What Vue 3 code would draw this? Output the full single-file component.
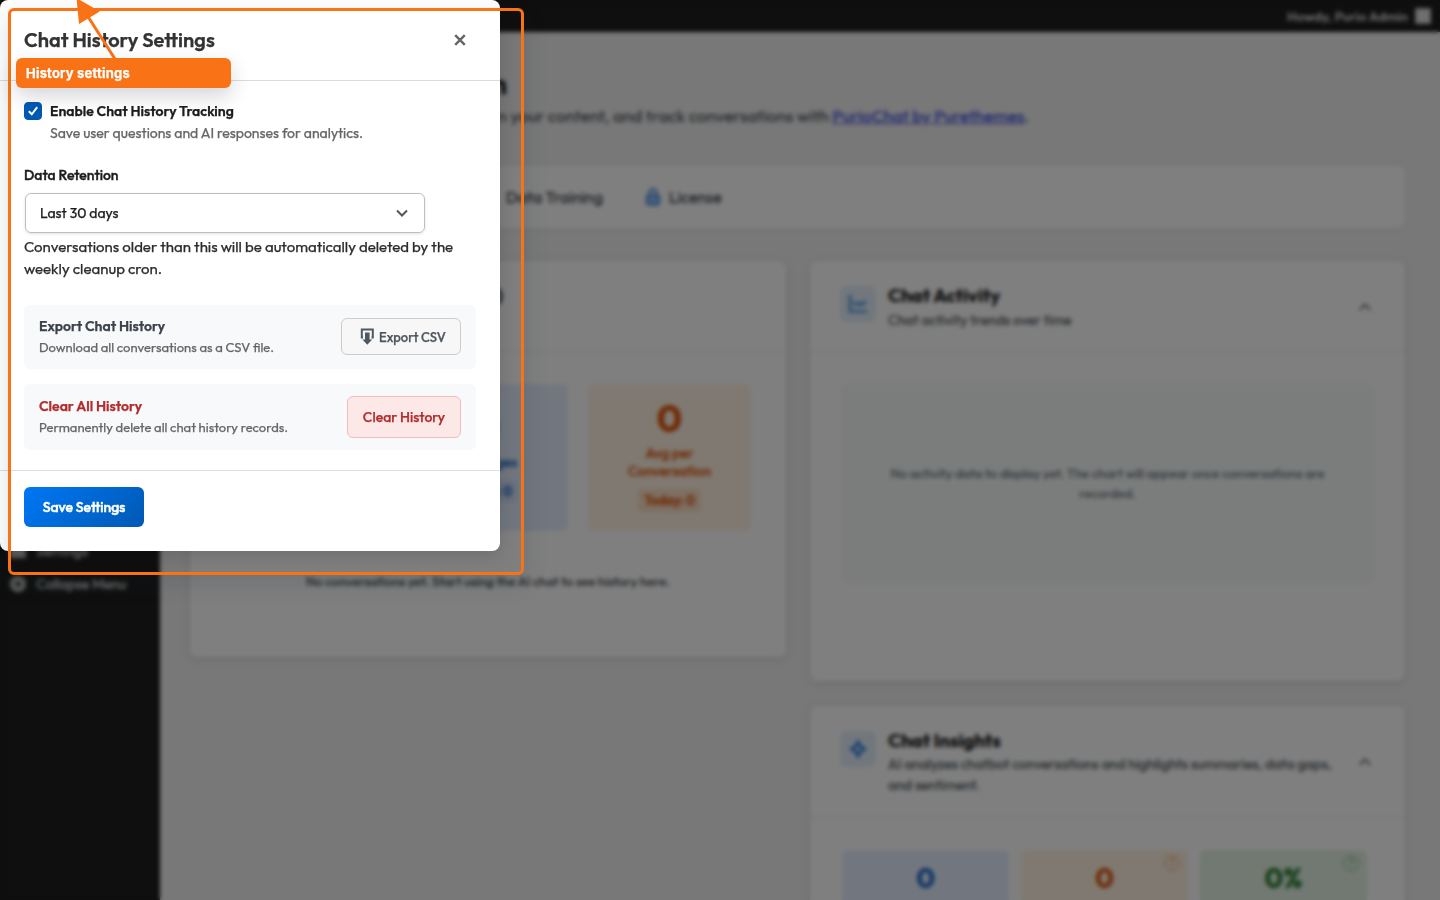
<template>
  <div class="screen">
    <div class="page">
      <header class="admin-bar">
        <span>Howdy, Purio Admin</span>
        <span class="avatar"></span>
      </header>
      <div class="page-body">
        <aside class="sidebar">
          <div class="menu-item menu-current"><i class="menu-square"></i><span>Settings</span></div>
          <div class="menu-item"><i class="menu-circle"></i><span>Collapse Menu</span></div>
        </aside>
        <main class="content">
          <div class="page-head">
            <h1>n</h1>
            <p>on your content, and track conversations with <a>PurioChat by Purethemes</a>.</p>
          </div>
          <nav class="tabs">
            <span class="tab tab-training">Data Training</span>
            <span class="tab">
              <svg width="16" height="20" viewBox="0 0 16 20">
                <path d="M4.500 8V5.500a3.500 3.500 0 0 1 7 0V8" fill="none" stroke="#3582dc" stroke-width="2" />
                <rect x="1.500" y="8" width="13" height="10" rx="3" fill="#8dbcf2" stroke="#3582dc" stroke-width="1.5" />
              </svg>
              License
            </span>
          </nav>
          <div class="columns">
            <section class="card card-history">
              <div class="card-head head-history"><h2>)</h2></div>
              <div class="stats">
                <div class="stat blue"></div>
                <div class="stat blue">
                  <strong>0</strong>
                  <span class="stat-label">Messages</span>
                  <span class="today">Today: 0</span>
                </div>
                <div class="stat orange">
                  <strong>0</strong>
                  <span class="stat-label">Avg per<br />Conversation</span>
                  <span class="today">Today: 0</span>
                </div>
              </div>
              <p class="empty">No conversations yet. Start using the AI chat to see history here.</p>
            </section>
            <div class="column">
              <section class="card card-activity">
                <div class="card-head">
                  <span class="card-icon">
                    <svg width="20" height="20" viewBox="0 0 20 20" fill="none" stroke="#3582dc" stroke-width="2.200">
                      <path d="M2 1v16.500h17M5 8l4 3 3-2 2 2 4-4" />
                    </svg>
                  </span>
                  <div class="card-title">
                    <h2>Chat Activity</h2>
                    <p>Chat activity trends over time</p>
                  </div>
                  <svg class="chevron" width="14" height="10" viewBox="0 0 14 10"><path d="M1.500 8 7 2.500 12.500 8" /></svg>
                </div>
                <div class="chart-empty">
                  <p>No activity data to display yet. The chart will appear once conversations are<br />recorded.</p>
                </div>
              </section>
              <section class="card card-insights">
                <div class="card-head">
                  <span class="card-icon">
                    <svg width="22" height="22" viewBox="0 0 22 22">
                      <path d="M11 1l3.200 5.800L20 11l-5.800 4.200L11 21l-3.200-5.800L2 11l5.800-4.200z" fill="#3582dc" />
                      <circle cx="11" cy="11" r="2.600" fill="#d5e7fb" />
                    </svg>
                  </span>
                  <div class="card-title">
                    <h2>Chat Insights</h2>
                    <p>AI analyzes chatbot conversations and highlights summaries, data gaps,<br />and sentiment.</p>
                  </div>
                  <svg class="chevron" width="14" height="10" viewBox="0 0 14 10"><path d="M1.500 8 7 2.500 12.500 8" /></svg>
                </div>
                <div class="insights">
                  <div v-for="item in insights" :key="item.tone" class="insight" :class="item.tone">
                    <strong>{{ item.value }}</strong>
                    <i v-if="item.help" class="help">?</i>
                  </div>
                </div>
              </section>
            </div>
          </div>
        </main>
      </div>
    </div>

    <div class="overlay"></div>

    <div class="modal">
      <div class="modal-head">
        <h3>Chat History Settings</h3>
        <button class="close" aria-label="Close">
          <svg width="14" height="14" viewBox="0 0 14 14"><path d="M2.200 2.200l9.600 9.600M11.800 2.200l-9.600 9.600" /></svg>
        </button>
      </div>
      <div class="modal-body">
        <div class="track" @click="tracking = !tracking">
          <span class="checkbox" :class="{ checked: tracking }">
            <svg v-if="tracking" width="18" height="18" viewBox="0 0 18 18"><path d="M4.800 9.300l3 3L13.200 5.200" /></svg>
          </span>
          <div>
            <div class="track-title">Enable Chat History Tracking</div>
            <div class="track-desc">Save user questions and AI responses for analytics.</div>
          </div>
        </div>
        <label class="field-label">Data Retention</label>
        <div class="select">
          <span>Last 30 days</span>
          <svg width="12" height="8" viewBox="0 0 12 8"><path d="M1 1.500l5 5 5-5" /></svg>
        </div>
        <p class="field-hint">Conversations older than this will be automatically deleted by the<br />weekly cleanup cron.</p>
        <div class="action">
          <div>
            <div class="action-title">Export Chat History</div>
            <div class="action-desc">Download all conversations as a CSV file.</div>
          </div>
          <button class="btn-export">
            <svg width="14" height="17" viewBox="0 0 14 17">
              <path d="M3 9.500H1.800V1.500h11v8h-1.300" fill="none" stroke="#50575e" stroke-width="2" />
              <path d="M5 4.500h4.600v7h2.600L7.300 16.800 2.400 11.500H5z" fill="#50575e" />
            </svg>
            <span>Export CSV</span>
          </button>
        </div>
        <div class="action danger">
          <div>
            <div class="action-title clear-title">Clear All History</div>
            <div class="action-desc">Permanently delete all chat history records.</div>
          </div>
          <button class="btn-clear">Clear History</button>
        </div>
      </div>
      <div class="modal-foot">
        <button class="btn-save">Save Settings</button>
      </div>
    </div>

    <!-- annotation drawn over the dialog -->
    <div class="marker"></div>
    <svg class="marker-arrow" width="130" height="70" viewBox="0 0 130 70">
      <path d="M115 59L87 15" stroke="#f97316" stroke-width="3" />
      <path d="M76.500-2L99.800 11.500 79 24z" fill="#f97316" />
    </svg>
    <div class="marker-label">History settings</div>
  </div>
</template>

<script setup>
import { ref } from 'vue'

const tracking = ref(true)

const insights = [
  { value: '0', tone: 'blue', help: false },
  { value: '0', tone: 'orange', help: true },
  { value: '0%', tone: 'green', help: true }
]
</script>

<style>
body {
  margin: 0;
  overflow: hidden;
}
</style>

<style scoped>
.screen {
  position: relative;
  width: 1440px;
  height: 900px;
  overflow: hidden;
  font-family: Outfit, Lato, "Open Sans", sans-serif;
  color: #1d1d1d;
  -webkit-text-stroke: 0.25px;
}

.screen * {
  box-sizing: border-box;
}

h1,
h2,
h3,
p {
  margin: 0;
}

button {
  font-family: inherit;
  cursor: pointer;
}

.page {
  height: 900px;
  background: #f0f0f1;
  overflow: hidden;
}

.admin-bar {
  height: 32px;
  background: #1e1e1e;
  color: #f0f0f1;
  display: flex;
  align-items: center;
  justify-content: flex-end;
  gap: 7px;
  padding-right: 9px;
  font-size: 13px;
  letter-spacing: 0.3px;
}

.avatar {
  width: 16px;
  height: 16px;
  background: #ddd;
  border: 1px solid #aaa;
}

.page-body {
  display: flex;
  height: 868px;
}

.sidebar {
  width: 160px;
  background: #1e1e1e;
  color: #ddd;
  padding-top: 502px;
  font-size: 14px;
}

.menu-item {
  height: 33px;
  display: flex;
  align-items: center;
  gap: 10px;
  padding-left: 10px;
}

.menu-current {
  letter-spacing: 0.3px;
}

.menu-square,
.menu-circle {
  width: 16px;
  height: 14px;
  background: #bbb;
}

.menu-circle {
  height: 16px;
  border-radius: 50%;
  border: 5px solid #bbb;
  background: #444;
}

.content {
  flex: 1;
  padding: 0 35px 0 30px;
}

.page-head {
  height: 134px;
  padding: 31px 0 0 298px;
}

h1 {
  padding-left: 3px;
  font-size: 28px;
  line-height: 42px;
  font-weight: 700;
}

.page-head p {
  font-size: 17px;
  line-height: 22px;
  color: #50575e;
  white-space: nowrap;
}

.page-head a {
  color: #3b4be0;
  text-decoration: underline;
}

.tabs {
  height: 62px;
  background: #fff;
  border-radius: 8px;
  box-shadow: 0 1px 4px rgba(0, 0, 0, 0.06);
  display: flex;
  align-items: center;
  gap: 42px;
  padding-left: 316px;
  font-size: 16px;
}

.tab {
  display: flex;
  align-items: center;
  gap: 8px;
  color: #3c434a;
}

.columns {
  display: flex;
  align-items: flex-start;
  gap: 24px;
  margin-top: 33px;
}

.column {
  width: 595px;
  display: flex;
  flex-direction: column;
  gap: 25px;
}

.card {
  background: #fff;
  border-radius: 8px;
  box-shadow: 0 2px 10px rgba(0, 0, 0, 0.1);
}

.card-history {
  width: 596px;
  height: 396px;
}

.card-activity {
  height: 420px;
}

.card-insights {
  height: 260px;
}

.card-head {
  height: 91px;
  border-bottom: 1px solid #e5e5e5;
  display: flex;
  align-items: flex-start;
  padding: 23px 33px 0 30px;
}

.card-insights .card-head {
  height: 112px;
}

.head-history {
  padding-left: 307px;
}

.card-icon {
  width: 36px;
  height: 36px;
  margin-top: 2px;
  margin-right: 12px;
  border-radius: 6px;
  background: #e3effb;
  display: flex;
  align-items: center;
  justify-content: center;
}

.card-title {
  flex: 1;
  white-space: nowrap;
}

h2 {
  font-size: 18.72px;
  line-height: 23px;
  font-weight: 700;
}

.card-title p {
  font-size: 14px;
  line-height: 21px;
  margin-top: 3px;
  color: #50575e;
}

.card-insights .card-title p {
  margin-top: 2px;
}

.chevron {
  align-self: center;
  margin-top: -22px;
  fill: none;
  stroke: #50575e;
  stroke-width: 1.6;
}

.stats {
  display: flex;
  gap: 20px;
  padding: 32px 32px 0;
}

.stat {
  width: 163px;
  height: 147px;
  padding-bottom: 7px;
  border-radius: 6px;
  display: flex;
  flex-direction: column;
  align-items: center;
  justify-content: center;
  font-size: 14px;
  text-align: center;
}

.stat strong {
  font-size: 38px;
  line-height: 44px;
}

.stat-label {
  line-height: 18px;
  margin-top: 4px;
  font-weight: 500;
}

.today {
  margin-top: 9px;
  padding: 0 6px;
  line-height: 23px;
  border-radius: 4px;
  font-size: 13px;
  font-weight: 600;
}

.blue {
  background: #e5eeff;
  color: #1967c8;
}

.orange {
  background: #fff3e2;
  color: #e05206;
}

.green {
  background: #e3f2e4;
  color: #237a2a;
}

.blue .today {
  background: #d2e1f8;
}

.orange .today {
  background: #fbdfc4;
}

.empty {
  margin-top: 40px;
  text-align: center;
  font-size: 13px;
  line-height: 20px;
  color: #3c434a;
}

.chart-empty {
  height: 201px;
  margin: 31px 31px 0;
  border: 1px solid #f4f4f4;
  border-radius: 6px;
  background: #f6fbf8;
  padding-top: 79px;
  text-align: center;
  font-size: 13px;
  line-height: 20px;
  color: #6b7280;
  white-space: nowrap;
}

.insights {
  display: flex;
  gap: 12px;
  padding: 32px 33px 0 32px;
}

.insight {
  position: relative;
  width: 167px;
  height: 110px;
  border-radius: 6px;
  text-align: center;
  padding-top: 10px;
}

.insight strong {
  font-size: 28px;
  line-height: 36px;
}

.help {
  position: absolute;
  top: 5px;
  right: 8px;
  width: 16px;
  height: 16px;
  border: 1px solid currentColor;
  border-radius: 50%;
  font-size: 10px;
  line-height: 14px;
  font-style: normal;
  opacity: 0.5;
}

.overlay {
  position: absolute;
  inset: 0;
  background: rgba(0, 0, 0, 0.5);
  backdrop-filter: blur(2px);
}

.modal {
  position: absolute;
  top: 0;
  left: 0;
  width: 500px;
  height: 551px;
  background: #fff;
  border-radius: 8px;
  box-shadow: 0 4px 20px rgba(0, 0, 0, 0.15);
}

.modal-head {
  height: 81px;
  border-bottom: 1px solid #dcdcde;
  padding: 0 33px 0 24px;
  display: flex;
  align-items: center;
  justify-content: space-between;
}

h3 {
  font-size: 20px;
  line-height: 24px;
  font-weight: 600;
  color: #333;
}

.close {
  display: flex;
  padding: 0;
  border: 0;
  background: none;
}

.close path {
  stroke: #666;
  stroke-width: 2.4;
}

.modal-body {
  height: 389px;
  padding: 20px 24px 0;
}

.track {
  display: flex;
  gap: 8px;
}

.checkbox {
  width: 18px;
  height: 18px;
  margin-top: 1px;
  border-radius: 4px;
  border: 1px solid #0059b3;
}

.checkbox.checked {
  background: #0059b3;
}

.checkbox svg {
  display: block;
  margin: -1px;
  fill: none;
  stroke: #fff;
  stroke-width: 2;
}

.track-title {
  font-size: 14px;
  line-height: 20px;
  font-weight: 600;
}

.track-desc {
  font-size: 14px;
  line-height: 22px;
  margin-top: 1px;
  color: #666;
}

.field-label {
  display: block;
  margin-top: 21px;
  font-size: 14px;
  line-height: 20px;
  font-weight: 500;
  -webkit-text-stroke: 0.4px;
}

.select {
  width: 400px;
  height: 40px;
  margin: 8px 0 0 1px;
  padding: 0 16px 0 14px;
  border: 1px solid #bfbfbf;
  border-radius: 6px;
  box-shadow: 0 1px 3px rgba(0, 0, 0, 0.12);
  display: flex;
  align-items: center;
  justify-content: space-between;
  font-size: 14px;
}

.select path {
  fill: none;
  stroke: #555;
  stroke-width: 2;
}

.field-hint {
  margin-top: 3px;
  font-size: 15px;
  line-height: 22px;
  color: #2c2c2c;
  white-space: nowrap;
}

.action {
  height: 64px;
  margin-top: 25px;
  padding: 0 15px;
  border-radius: 6px;
  background: #f8f9fb;
  display: flex;
  align-items: center;
  justify-content: space-between;
}

.action.danger {
  height: 66px;
  margin-top: 15px;
}

.action-title {
  font-size: 14px;
  line-height: 21px;
  font-weight: 600;
  color: #3c434a;
}

.action-desc {
  font-size: 13px;
  line-height: 21px;
  color: #666;
}

.action-title.clear-title {
  color: #b32d2e;
}

.btn-export {
  width: 120px;
  height: 37px;
  margin-bottom: 1px;
  padding: 0 0 0 18px;
  border: 1px solid #ccc;
  border-radius: 6px;
  background: #f7f7f7;
  display: flex;
  align-items: center;
  gap: 5px;
  font-size: 13px;
  font-weight: 500;
  color: #50575e;
}

.btn-export svg {
  flex-shrink: 0;
}

.btn-clear {
  width: 114px;
  height: 42px;
  padding: 0;
  border: 1px solid #f3bcbc;
  border-radius: 6px;
  background: #fde8e8;
  font-size: 14px;
  font-weight: 500;
  color: #b32d2e;
}

.modal-foot {
  border-top: 1px solid #dcdcde;
  padding: 16px 24px;
}

.btn-save {
  width: 120px;
  height: 40px;
  padding: 0;
  border: 0;
  border-radius: 6px;
  background: linear-gradient(135deg, #0077f5, #0059b3);
  font-size: 14px;
  font-weight: 500;
  color: #fff;
  -webkit-text-stroke: 0.5px;
}

.marker {
  position: absolute;
  top: 8px;
  left: 8px;
  width: 516px;
  height: 567px;
  border: 3px solid #f97316;
  border-radius: 6px;
  box-shadow: 0 8px 24px rgba(15, 40, 50, 0.14);
}

.marker-arrow {
  position: absolute;
  top: 0;
  left: 0;
}

.marker-label {
  position: absolute;
  top: 58px;
  left: 16px;
  width: 215px;
  height: 30px;
  padding-left: 10px;
  border-radius: 6px;
  background: #f97316;
  box-shadow: 0 8px 20px rgba(15, 23, 42, 0.18);
  color: #fff;
  font-family: Inter, sans-serif;
  font-size: 13px;
  font-weight: 700;
  letter-spacing: 0.2px;
  line-height: 30px;
}
</style>
